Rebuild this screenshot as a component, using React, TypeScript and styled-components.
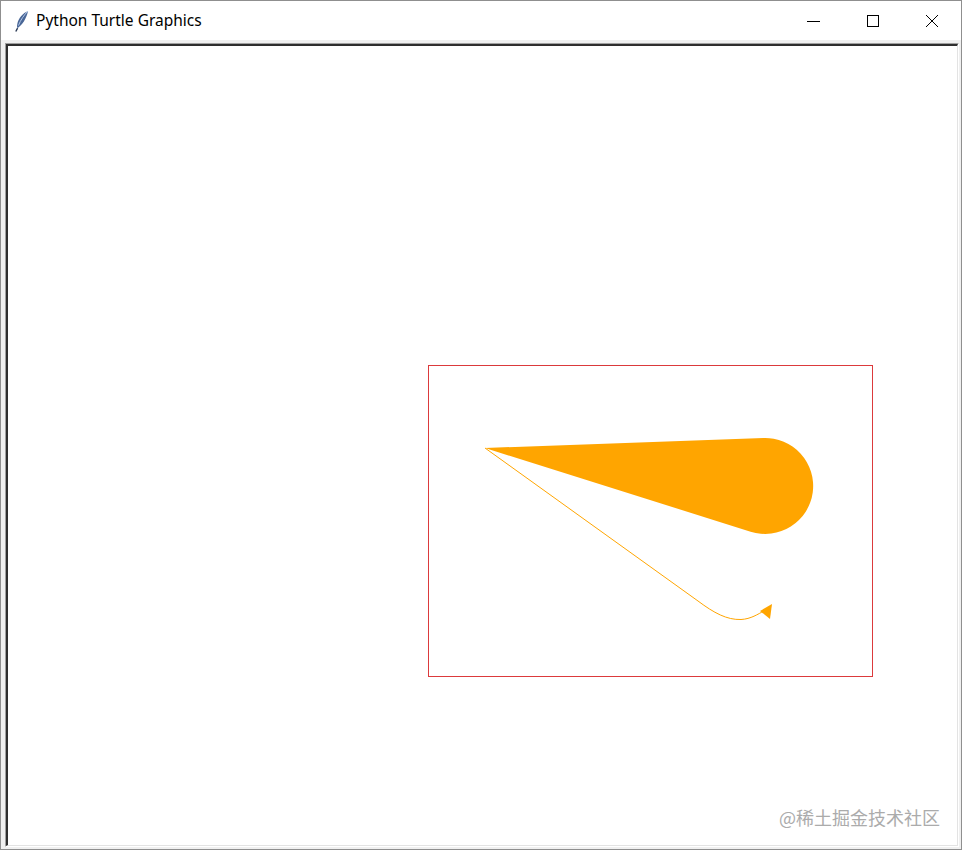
import React from 'react'
import styled, { createGlobalStyle } from 'styled-components'

const GlobalStyle = createGlobalStyle`
  html, body {
    margin: 0;
    padding: 0;
    background: #ffffff;
  }
`

const Window = styled.div`
  width: 962px;
  height: 850px;
  box-sizing: border-box;
  border: 1px solid #8f8f8f;
  display: flex;
  flex-direction: column;
  background: #ffffff;
  overflow: hidden;
`

const TitleBar = styled.div`
  height: 39px;
  flex: 0 0 39px;
  display: flex;
  align-items: center;
  background: #ffffff;
`

const AppIcon = styled.div`
  width: 20px;
  height: 24px;
  margin-left: 11px;
  display: flex;
  align-items: center;
  justify-content: center;
`

const Title = styled.span`
  margin-left: 4px;
  font-family: 'Noto Sans', 'Open Sans', sans-serif;
  font-size: 15.5px;
  line-height: 20px;
  margin-top: -2px;
  color: #000000;
  flex: 1;
`

const Controls = styled.div`
  display: flex;
  height: 100%;
`

const CaptionButton = styled.div`
  width: 59px;
  height: 100%;
  display: flex;
  align-items: center;
  justify-content: center;
`

const Frame = styled.div`
  flex: 1;
  background: #f0f0f0;
  padding: 3px 2px 2px 4px;
  display: flex;
`

const Canvas = styled.div`
  flex: 1;
  display: flex;
  border-style: solid;
  border-width: 1px;
  border-color: #a0a0a0 #ffffff #ffffff #a0a0a0;
`

const CanvasInner = styled.div`
  flex: 1;
  position: relative;
  background: #ffffff;
  border-style: solid;
  border-width: 2px 1px 1px 2px;
  border-color: #2e2e2e #e3e3e3 #e3e3e3 #2e2e2e;
  overflow: hidden;
`

const Drawing = styled.svg`
  display: block;
`

const Watermark = styled.span`
  position: absolute;
  right: 17px;
  bottom: 16px;
  line-height: 24px;
  font-family: 'Noto Sans CJK SC', sans-serif;
  font-size: 18px;
  color: #ababab;
  white-space: nowrap;
`

const FeatherIcon: React.FC = () => (
  <svg width="16" height="22" viewBox="0 0 16 22">
    <path d="M14 1 C9 3 4.5 8 3.3 14 C2.8 16 3 17.5 3.6 18.2 C8 15 12.5 9 14 1 Z" fill="#4a6797" />
    <path d="M14 1 C10 5 6.5 10 4.5 15.5" stroke="#b3c8e8" strokeWidth="1" fill="none" />
    <path d="M3.6 18.2 L1.8 21.5" stroke="#2b3a55" strokeWidth="1.4" />
  </svg>
)

const App: React.FC = () => {
  // canvas content origin sits at page (8, 46)
  return (
    <>
      <GlobalStyle />
      <Window>
        <TitleBar>
          <AppIcon>
            <FeatherIcon />
          </AppIcon>
          <Title>Python Turtle Graphics</Title>
          <Controls>
            <CaptionButton>
              <svg width="14" height="14" viewBox="0 0 14 14">
                <path d="M0 7.5 H13" stroke="#000" strokeWidth="1" />
              </svg>
            </CaptionButton>
            <CaptionButton>
              <svg width="14" height="14" viewBox="0 0 14 14">
                <rect x="1.5" y="1.5" width="11" height="11" stroke="#000" strokeWidth="1" fill="none" />
              </svg>
            </CaptionButton>
            <CaptionButton>
              <svg width="14" height="14" viewBox="0 0 14 14">
                <path d="M1 1 L13 13 M13 1 L1 13" stroke="#000" strokeWidth="1" />
              </svg>
            </CaptionButton>
          </Controls>
        </TitleBar>
        <Frame>
          <Canvas>
            <CanvasInner>
              <Drawing width="949" height="799" viewBox="8 46 949 799">
                <rect x="428.5" y="365.5" width="444" height="311" fill="none" stroke="#dc3a3c" strokeWidth="1" />
                <path
                  d="M485 448 L763.3 438 A48 48 0 1 1 750.6 531.7 Z"
                  fill="#ffa500"
                />
                <path
                  d="M485 448 L698 601 C714 613 727 620 741 619.5 C751 619 758 614 764 611"
                  fill="none"
                  stroke="#ffa500"
                  strokeWidth="1"
                />
                <polygon points="772,604 760,611 770,619" fill="#ffa500" />
              </Drawing>
              <Watermark>@稀土掘金技术社区</Watermark>
            </CanvasInner>
          </Canvas>
        </Frame>
      </Window>
    </>
  )
}

export default App
